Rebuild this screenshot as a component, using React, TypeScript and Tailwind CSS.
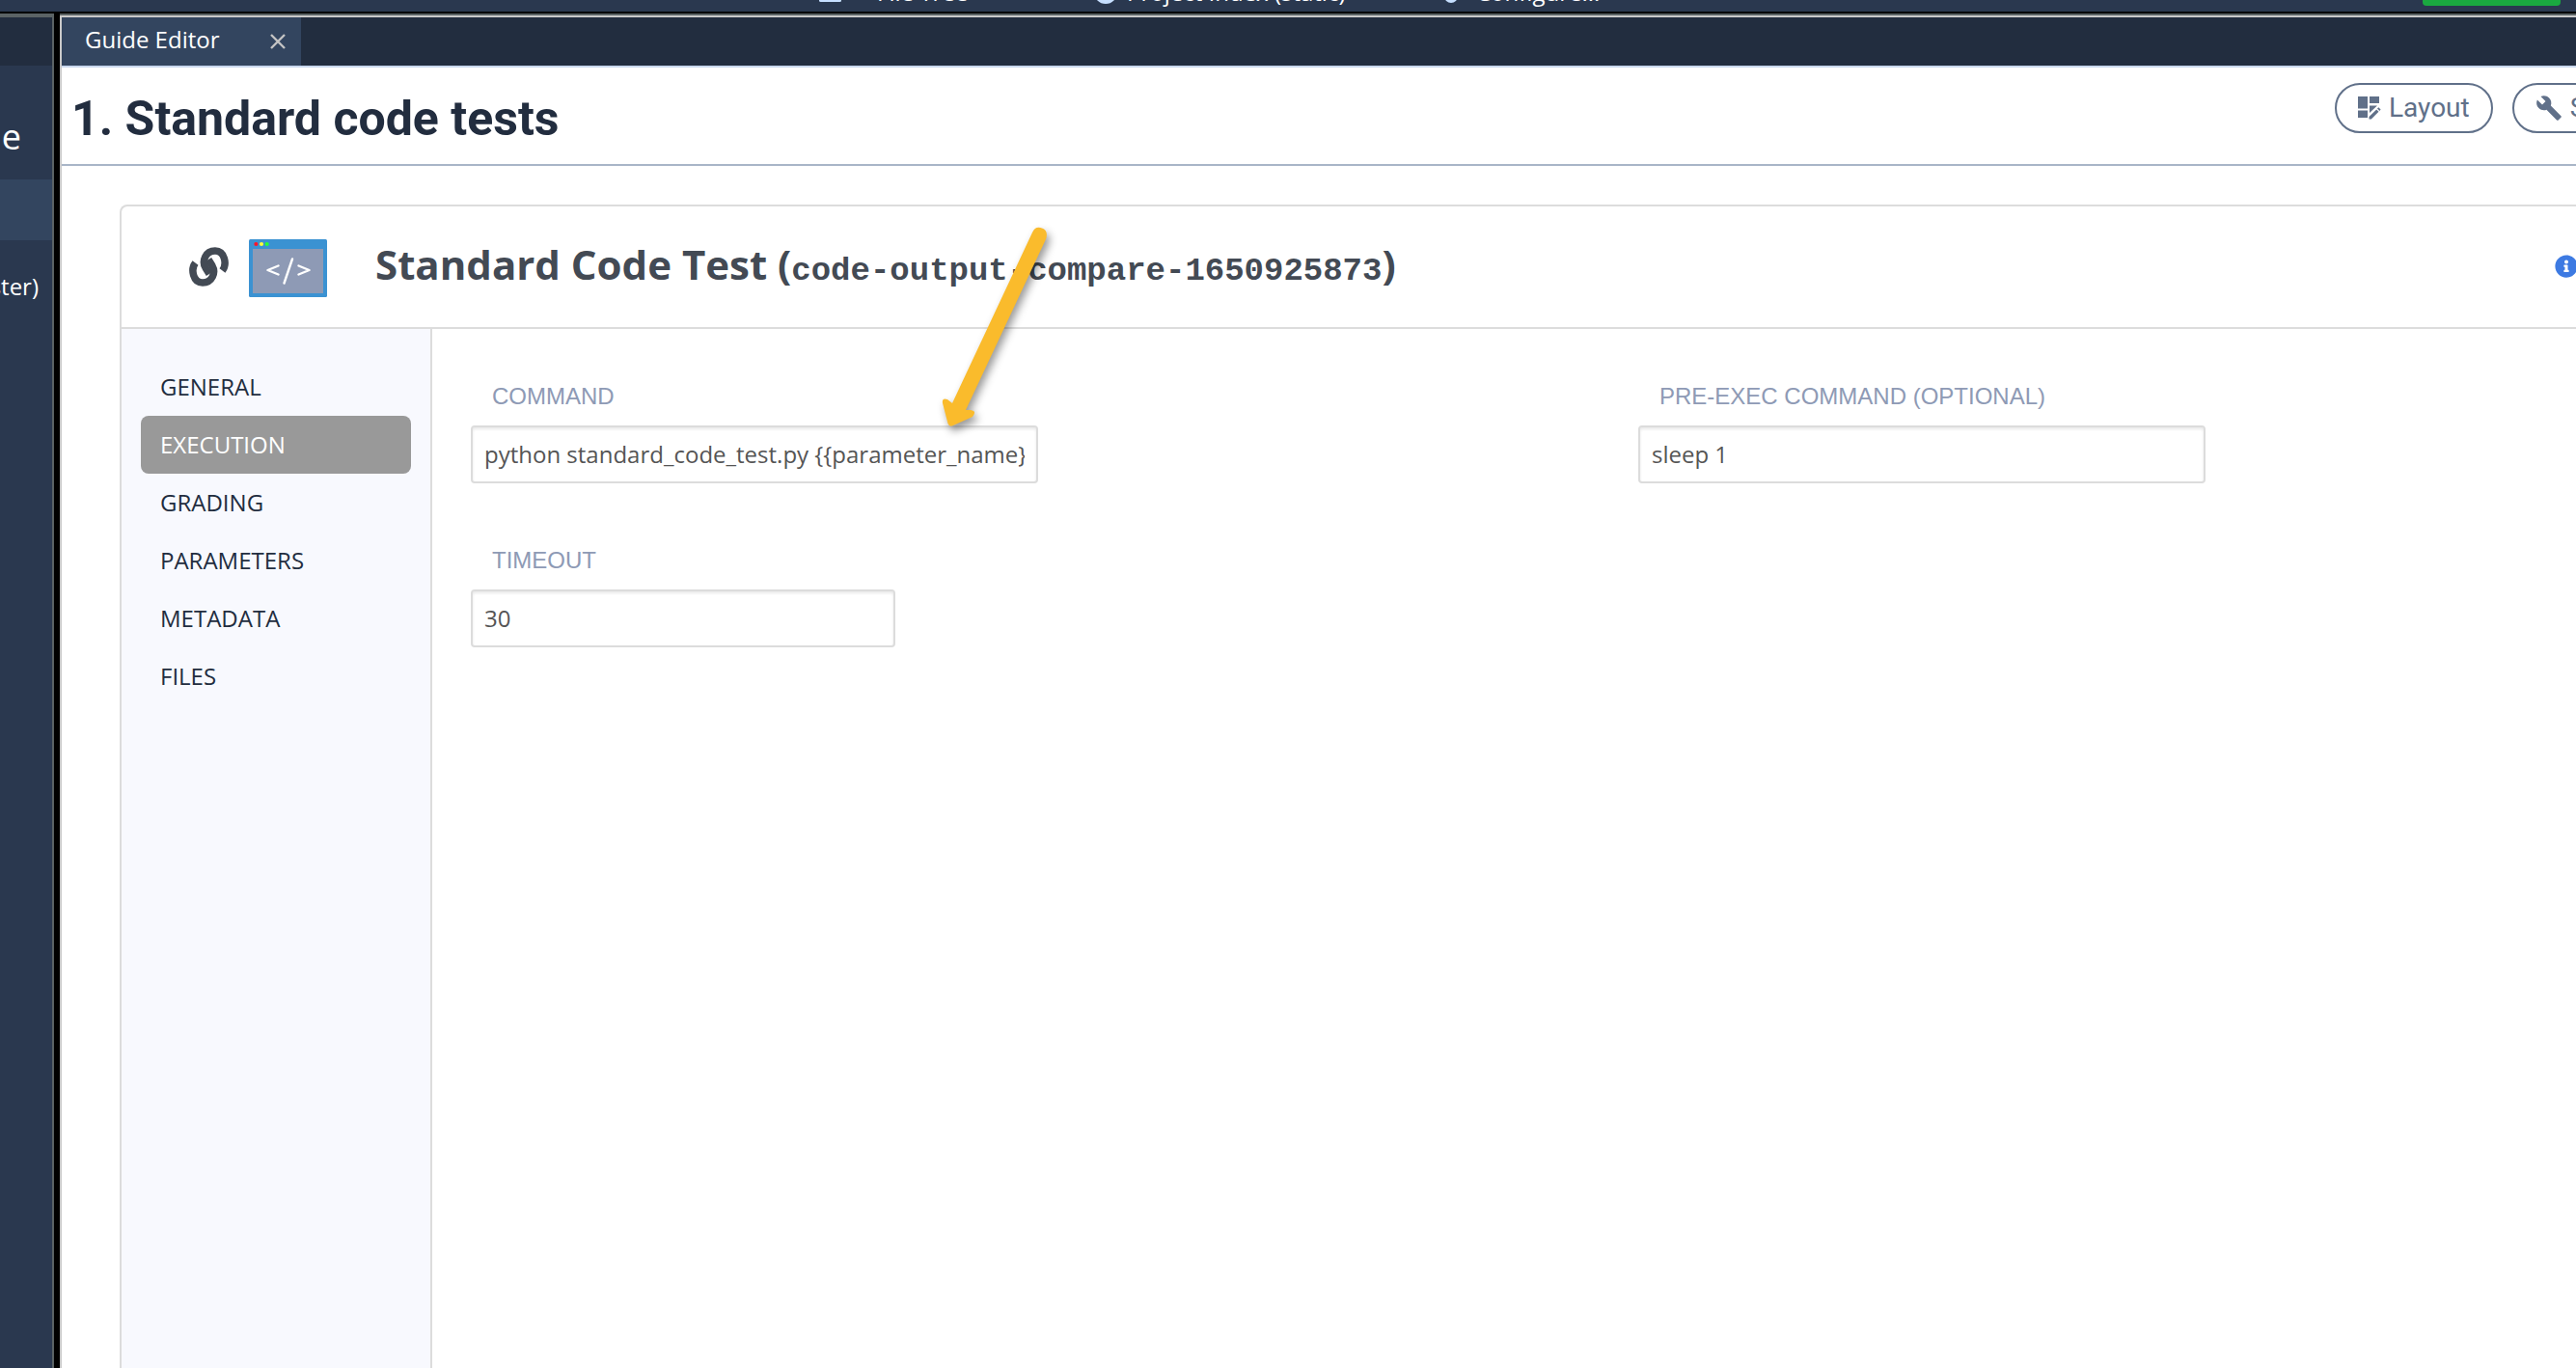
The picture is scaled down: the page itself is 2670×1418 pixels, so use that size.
import { ReactNode } from "react";
import { FaInfoCircle } from "react-icons/fa";
import { MdBuild } from "react-icons/md";

const NAV = ["GENERAL", "EXECUTION", "GRADING", "PARAMETERS", "METADATA", "FILES"];

function Field({ id, label, value, width }: { id: string; label: string; value: string; width: string }) {
  return (
    <div>
      <label htmlFor={id} className="block pl-[22px] font-['Liberation_Sans',sans-serif] text-2xl text-[#8e9ab5]">
        {label}
      </label>
      <input
        id={id}
        type="text"
        defaultValue={value}
        className={`mt-[14px] block h-[60px] rounded border-2 border-[#dcdcdc] bg-white px-3 pb-0.5 text-2xl text-[#555] shadow-[inset_0_2px_3px_rgba(0,0,0,0.09)] outline-none ${width}`}
      />
    </div>
  );
}

function LinkIcon() {
  return (
    <svg viewBox="0 0 41 41" className="size-[41px] shrink-0 stroke-[#434a54]" fill="none" strokeWidth="7.5" aria-hidden="true">
      <path d="M6.500 16.500C1.500 23 4 37 14 37 24 37 28 26.500 24 19.500L20 13" />
      <path d="M34.500 24.500C39.500 18 37 4 27 4 17 4 13 14.500 17 21.500L21 28" />
    </svg>
  );
}

function CodeWindowIcon() {
  return (
    <svg viewBox="0 0 81 60" className="h-[60px] w-[81px] shrink-0" fill="none" aria-hidden="true">
      <rect width="81" height="60" rx="1.5" fill="#3b92d2" />
      <rect x="4" y="10" width="73" height="46" fill="#8e9ab5" />
      <circle cx="7.4" cy="5" r="2.1" fill="#ff1528" />
      <circle cx="13" cy="5" r="2.1" fill="#ffff3b" />
      <circle cx="18.7" cy="5" r="2.1" fill="#26ff39" />
      <path d="M30.500 27.500 19.500 32l11 4.500M51.500 27.500l11 4.500-11 4.500M45 20.500l-8.500 25" stroke="#fff" strokeWidth="2.4" strokeLinecap="round" strokeLinejoin="round" />
    </svg>
  );
}

function LayoutIcon() {
  return (
    <svg viewBox="0 0 24 24" className="size-6" fill="currentColor" aria-hidden="true">
      <path d="M0 0h10v12.500H0zM12 0h10v7H12zM0 14.500h10V22H0zM12 9.500h8L12 17z" />
      <path d="M21.300 11.300 23.600 13.600 22.300 14.900 20 12.600zM19.200 13.400l2.300 2.300-7.700 7.700h-2.300v-2.300z" />
    </svg>
  );
}

function PillButton({ children }: { children: ReactNode }) {
  return (
    <button type="button" className="flex h-[52px] shrink-0 items-center gap-2 rounded-full border-2 border-[#607089] px-[22px] font-[Roboto,sans-serif] text-[28px] text-[#607089]">
      {children}
    </button>
  );
}

function Arrow() {
  return (
    <svg viewBox="0 0 140 250" className="pointer-events-none absolute top-[220px] left-[960px] h-[250px] w-[140px]" fill="#fabb2c" aria-hidden="true">
      <g className="drop-shadow-[3px_5px_4px_rgba(0,0,0,0.4)]">
        <path d="M110 21 27 198 22 194Q16 192 17 198L22.500 219Q24 223 28 221L48 212Q53 206 46 205L41 205 124 28Q127 19 120 16.500 113 14 110 21z" />
      </g>
    </svg>
  );
}

export default function App() {
  return (
    <div className="relative flex h-screen flex-col overflow-hidden bg-black font-['Open_Sans',sans-serif] text-2xl">
      <header className="flex h-3 shrink-0 items-end overflow-hidden bg-[#2a384f] pr-4 pb-1 pl-[849px] leading-8 whitespace-nowrap text-white">
        <button type="button" className="flex w-[287px] items-end gap-9">
          <svg viewBox="0 0 24 24" className="mb-1.5 size-6 shrink-0" fill="#c6dfff" aria-hidden="true"><rect y="3" width="23" height="21" rx="1.500" /></svg>
          File Tree
        </button>
        <button type="button" className="flex w-[358px] items-end gap-2">
          <svg viewBox="0 0 24 24" className="mb-1 size-6 shrink-0" fill="#c6dfff" aria-hidden="true"><circle cx="10" cy="12" r="12" /></svg>
          Project Index (static)
        </button>
        <button type="button" className="flex items-end gap-3">
          <svg viewBox="0 0 24 24" className="mb-1 size-6 shrink-0" fill="#c6dfff" aria-hidden="true"><circle cx="10" cy="16" r="7" /></svg>
          Configure...
        </button>
        <button type="button" aria-label="Run" className="mb-0.5 ml-auto h-9 w-[143px] shrink-0 rounded bg-[#1aa840]" />
      </header>
      <div className="mt-[2px] flex min-h-0 flex-1">
        <aside className="w-14 shrink-0 overflow-hidden border-t-4 border-r-2 border-[#5b6365] bg-[#2a384f] text-white">
          <div className="h-[50px] bg-[#222d3f]" />
          <div className="flex h-[118px] items-center justify-end pt-[30px] pr-8 text-4xl">e</div>
          <div className="h-[63px] bg-[#33455f]" />
          <div className="flex h-24 items-center justify-end pr-[14px]">ster)</div>
        </aside>
        <main className="ml-1.5 flex min-w-0 flex-1 flex-col border-t-2 border-[#5b6365]">
          <div className="flex min-h-0 flex-1 flex-col border-t-2 border-l-2 border-[#c9c9c9] bg-white">
            <div className="flex h-[52px] shrink-0 border-b-2 border-[#c9d8ee] bg-[#222d3f]">
              <div className="flex w-[248px] items-center justify-between bg-[#33455f] pr-4 pl-6 text-white">
                <span className="pb-1">Guide Editor</span>
                <button type="button" aria-label="Close tab">
                  <svg viewBox="0 0 16 16" className="size-4" stroke="#c4c4c4" strokeWidth="2.4"><path d="M1 1l14 14M15 1 1 15" /></svg>
                </button>
              </div>
            </div>
            <div className="flex h-[102px] shrink-0 items-start justify-between border-b-2 border-[#a9b5c7] pl-2.5">
              <h1 className="pt-[21px] font-[Roboto,sans-serif] text-[50px] leading-[64px] font-bold text-[#222d3f]">1. Standard code tests</h1>
              <div className="flex w-[250px] shrink-0 gap-5 overflow-hidden pt-4">
                <PillButton><LayoutIcon />Layout</PillButton>
                <PillButton><MdBuild className="size-7" />Settings</PillButton>
              </div>
            </div>
            <section className="mt-10 ml-[60px] flex min-h-0 flex-1 flex-col rounded-tl-lg border-t-2 border-l-2 border-[#dcdcdc]">
              <div className="flex h-[127px] shrink-0 items-center border-b-2 border-[#dcdcdc] pl-[70px]">
                <LinkIcon />
                <div className="ml-[21px] pt-0.5"><CodeWindowIcon /></div>
                <h2 className="ml-[50px] pb-0.5 text-[42px] font-bold text-[#434a54]">
                  Standard Code Test (<span className="font-['Liberation_Mono',monospace] text-[34px]">code-output-compare-1650925873</span>)
                </h2>
                <button type="button" aria-label="Help" className="-mr-0.5 mb-0.5 ml-auto shrink-0 text-[#3d7ae2]">
                  <FaInfoCircle className="size-6" />
                </button>
              </div>
              <div className="flex min-h-0 flex-1">
                <nav className="w-[322px] shrink-0 border-r-2 border-[#dcdcdc] bg-[#f8f9fe] px-5 pt-[30px]">
                  {NAV.map((item) => (
                    <button
                      key={item}
                      type="button"
                      className={`block h-[60px] w-full rounded-lg px-5 text-left ${item === "EXECUTION" ? "bg-[#999] text-white" : "text-[#222d3f]"}`}
                    >
                      {item}
                    </button>
                  ))}
                </nav>
                <div className="grid flex-1 grid-cols-[5fr_4fr] content-start gap-y-16 pt-[54px] pr-1 pl-10">
                  <Field id="command" label="COMMAND" value="python standard_code_test.py {{parameter_name}}" width="w-[588px]" />
                  <Field id="pre-exec" label="PRE-EXEC COMMAND (OPTIONAL)" value="sleep 1" width="w-[588px]" />
                  <Field id="timeout" label="TIMEOUT" value="30" width="w-[440px]" />
                </div>
              </div>
            </section>
          </div>
        </main>
      </div>
      <Arrow />
    </div>
  );
}
